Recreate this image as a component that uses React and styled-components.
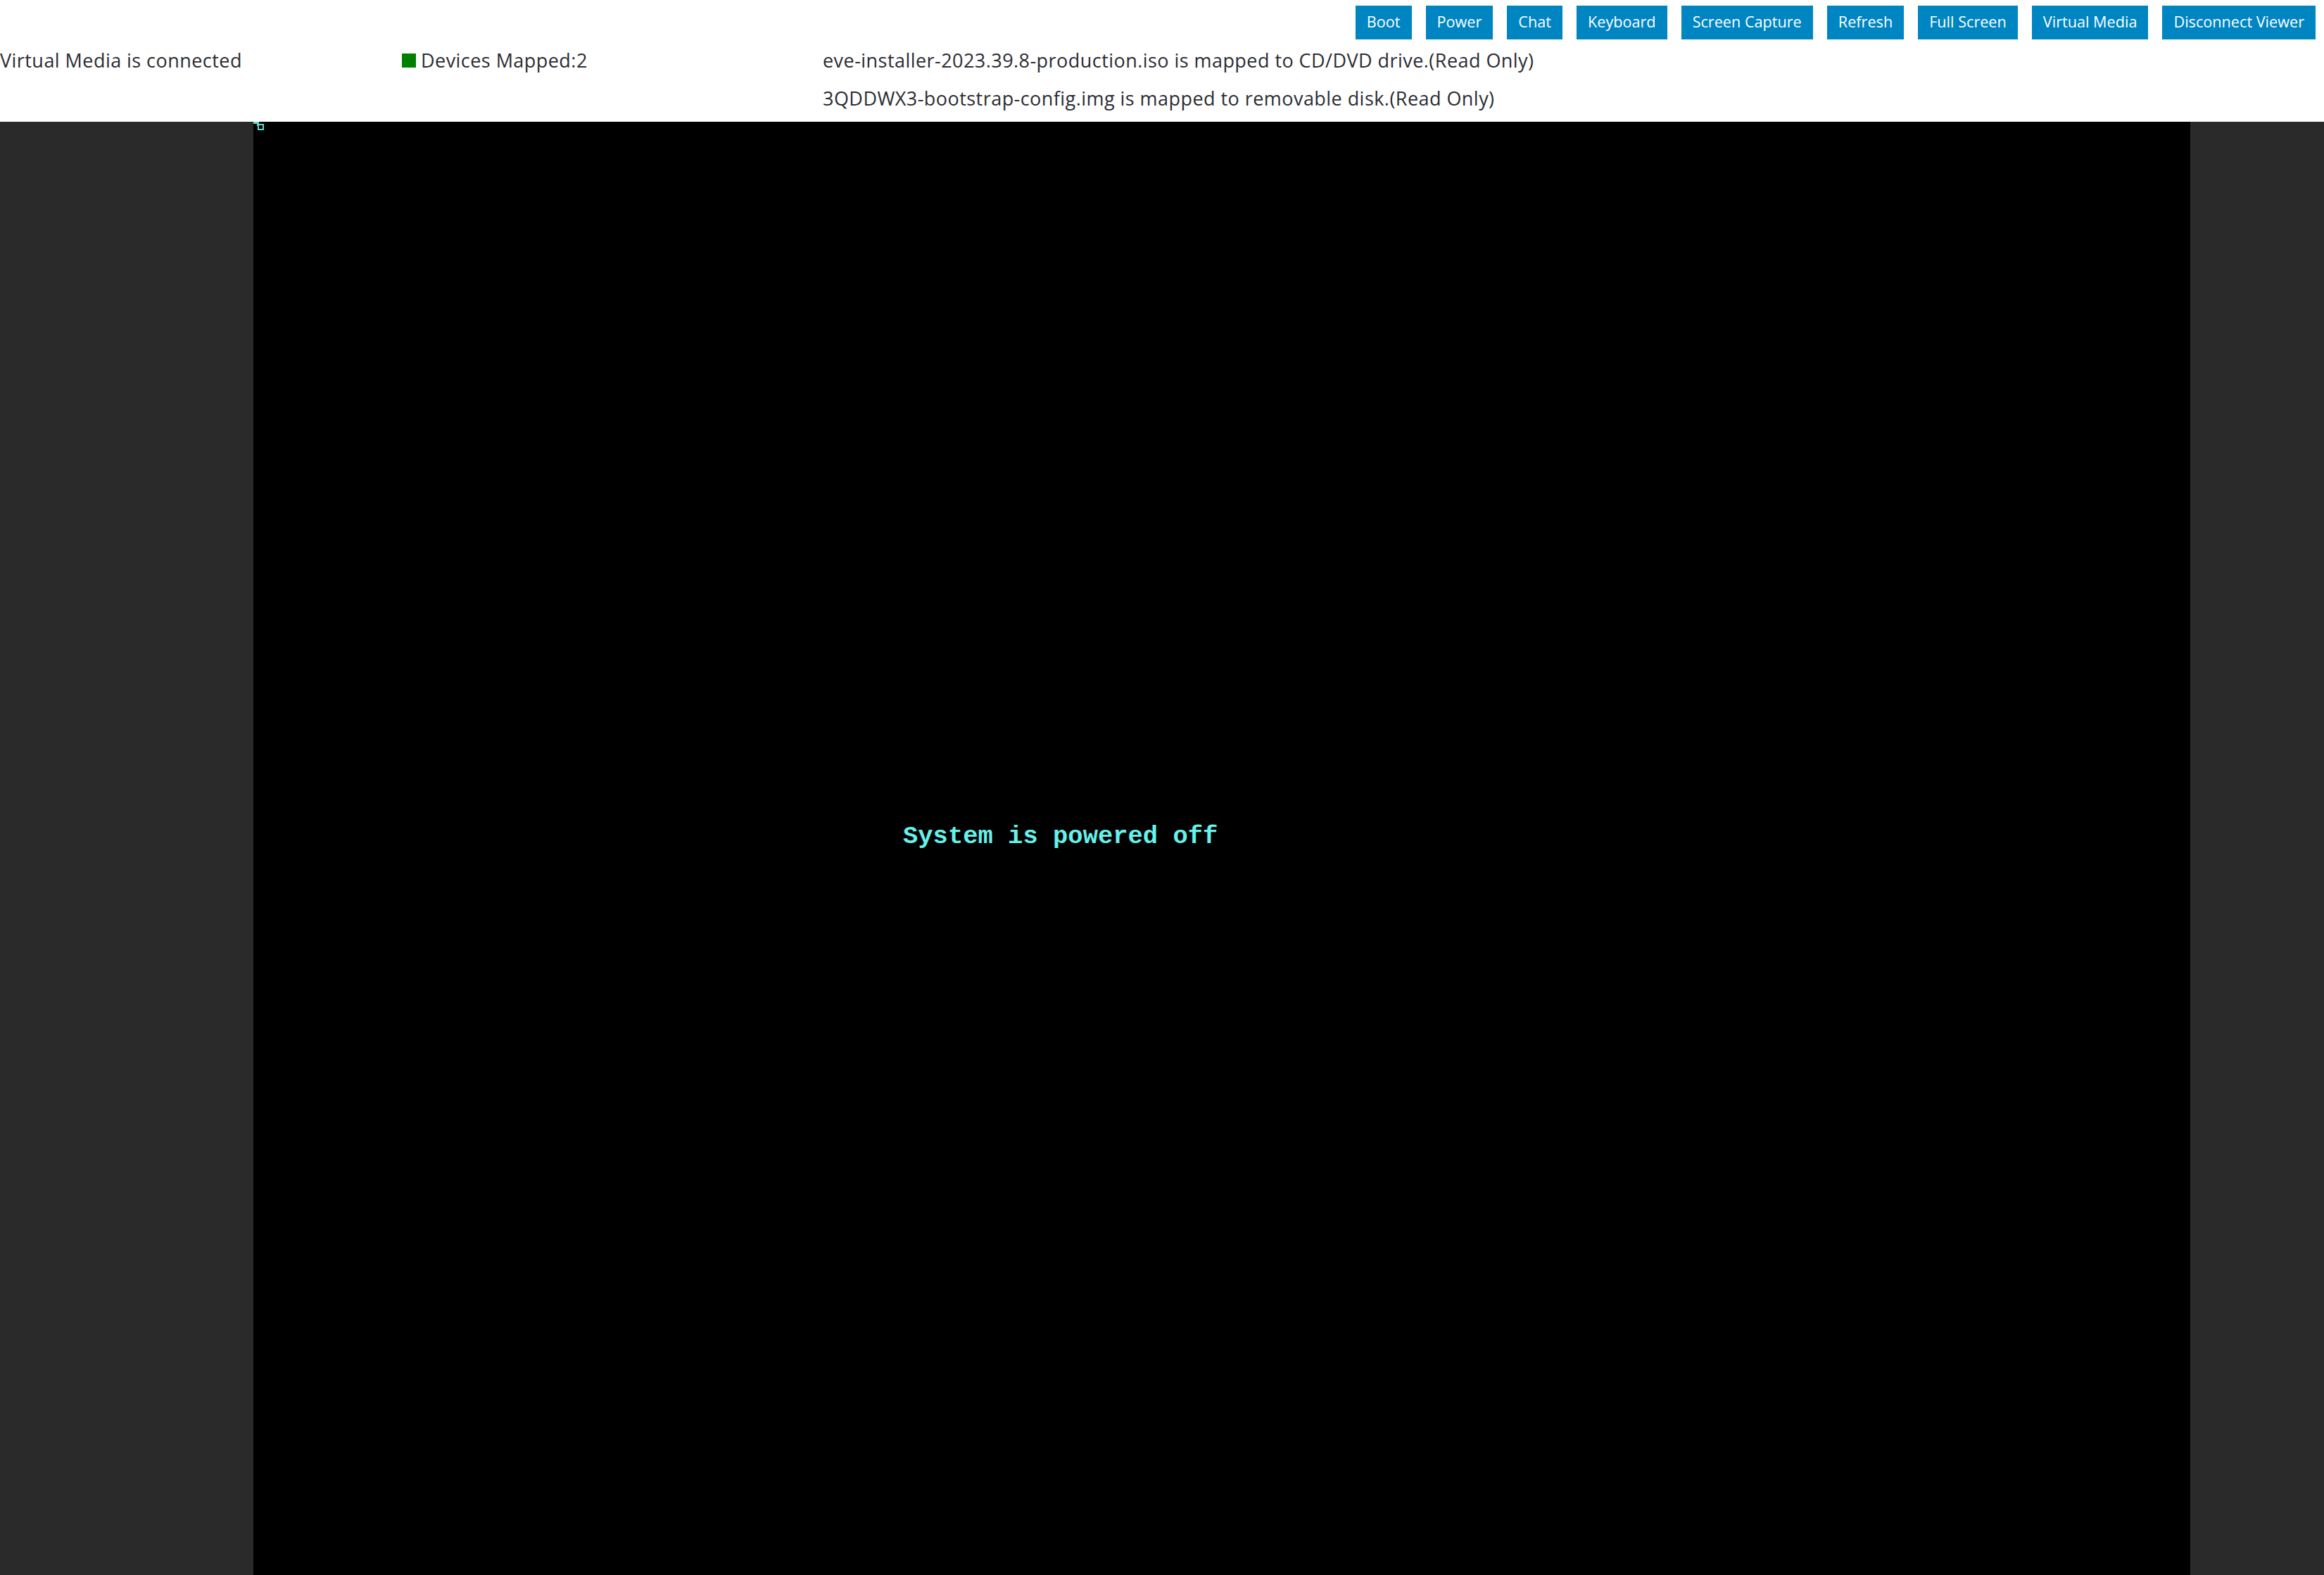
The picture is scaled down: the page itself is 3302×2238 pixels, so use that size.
import React from "react";
import styled, { createGlobalStyle } from "styled-components";

const Global = createGlobalStyle`
  html, body { margin: 0; padding: 0; background: #2a2a2a; }
  body { font-family: "Open Sans", Lato, sans-serif; }
  #root { min-height: 100vh; }
`;

const Page = styled.div`
  display: flex;
  flex-direction: column;
  height: 100vh;
  overflow: hidden;
`;

const Header = styled.header`
  background: #ffffff;
  display: flex;
  flex-direction: column;
  padding-bottom: 6px;
`;

const Toolbar = styled.nav`
  display: flex;
  justify-content: flex-end;
  gap: 20px;
  padding: 8px 12px 0 0;
`;

const ToolButton = styled.button`
  height: 48px;
  padding: 0 16px 3px;
  border: none;
  border-radius: 0;
  background: #0085c3;
  color: #ffffff;
  font-family: "Open Sans", Lato, sans-serif;
  font-size: 21.65px;
  cursor: pointer;
`;

const InfoGrid = styled.div`
  display: grid;
  grid-template-columns: 571px 598px 1fr;
  padding-top: 3px;
  font-size: 27px;
  letter-spacing: 0.45px;
  line-height: 54px;
  color: #2b2d33;
`;

const Cell = styled.div`
  grid-column: ${(p) => p.$col};
  display: flex;
  align-items: center;
  white-space: nowrap;
`;

const StatusSquare = styled.span`
  width: 20px;
  height: 20px;
  background: #008000;
  margin-right: 7px;
`;

const Viewport = styled.main`
  flex: 1;
  display: grid;
  grid-template-columns: 360px 2752px 1fr;
  background: #2a2a2a;
`;

const Screen = styled.div`
  grid-column: 2;
  background: #000000;
  position: relative;
`;

const ConsoleText = styled.div`
  position: absolute;
  left: 923px;
  top: 996px;
  font-family: "Liberation Mono", "DejaVu Sans Mono", monospace;
  font-weight: bold;
  font-size: 35.5px;
  line-height: 40px;
  color: #66f2ea;
  white-space: pre;
`;

const Cursor = styled.svg`
  position: absolute;
  left: 0;
  top: 0;
`;

const buttons = [
  "Boot",
  "Power",
  "Chat",
  "Keyboard",
  "Screen Capture",
  "Refresh",
  "Full Screen",
  "Virtual Media",
  "Disconnect Viewer",
];

export default function App() {
  return (
    <Page>
      <Global />
      <Header>
        <Toolbar>
          {buttons.map((b) => (
            <ToolButton key={b}>{b}</ToolButton>
          ))}
        </Toolbar>
        <InfoGrid>
          <Cell $col={1}>Virtual Media is connected</Cell>
          <Cell $col={2}>
            <StatusSquare />
            Devices Mapped:2
          </Cell>
          <Cell $col={3}>
            eve-installer-2023.39.8-production.iso is mapped to CD/DVD drive.(Read Only)
          </Cell>
          <Cell $col={3}>
            3QDDWX3-bootstrap-config.img is mapped to removable disk.(Read Only)
          </Cell>
        </InfoGrid>
      </Header>
      <Viewport>
        <Screen>
          <Cursor width="16" height="12" viewBox="0 0 16 12">
            <rect x="0" y="0" width="8" height="3" fill="#5fd8d0" />
            <rect x="5" y="0" width="3" height="6" fill="#5fd8d0" />
            <rect x="7" y="4" width="7" height="7" fill="none" stroke="#5fd8d0" strokeWidth="2" />
          </Cursor>
          <ConsoleText>System is powered off</ConsoleText>
        </Screen>
      </Viewport>
    </Page>
  );
}
